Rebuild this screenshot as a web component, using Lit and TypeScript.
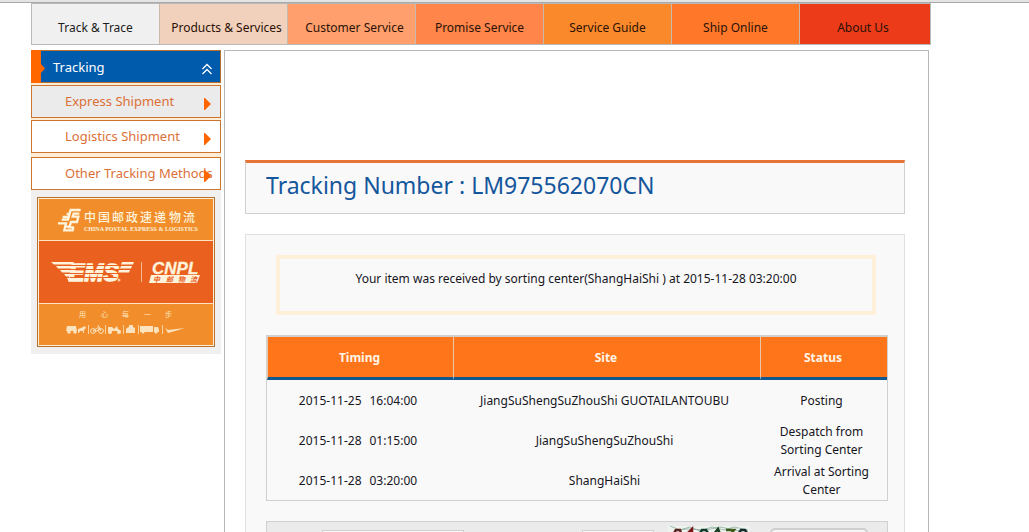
import { LitElement, html, css } from "lit";
import { customElement, property } from "lit/decorators.js";

const NAV = [
  { label: "Track & Trace", tone: "t1" },
  { label: "Products & Services", tone: "t2" },
  { label: "Customer Service", tone: "t3" },
  { label: "Promise Service", tone: "t4" },
  { label: "Service Guide", tone: "t5" },
  { label: "Ship Online", tone: "t6" },
  { label: "About Us", tone: "t7" },
];

const EVENTS = [
  { day: "2015-11-25", time: "16:04:00", site: "JiangSuShengSuZhouShi GUOTAILANTOUBU", status: "Posting" },
  { day: "2015-11-28", time: "01:15:00", site: "JiangSuShengSuZhouShi", status: "Despatch from Sorting Center" },
  { day: "2015-11-28", time: "03:20:00", site: "ShangHaiShi", status: "Arrival at Sorting Center" },
];

@customElement("site-nav")
export class SiteNav extends LitElement {
  static styles = css`
    :host { display: block; }
    .bar {
      display: grid;
      grid-template-columns: 127fr repeat(5, 128fr) 131fr;
      border: 1px solid #b9b9b9;
    }
    .item {
      height: 40px;
      padding-top: 8px;
      box-sizing: border-box;
      border-left: 1px solid #c9b9ab;
      font: 12px/32px "Noto Sans", "Open Sans", sans-serif;
      text-align: center;
      white-space: nowrap;
      text-decoration: none;
      color: #2b1206;
    }
    .t1 { background: #f0f0f0; color: #1c1c1c; border-left: 0; }
    .t2 { background: #f2d1bc; }
    .t3 { background: #ff9f6d; }
    .t4 { background: #ff854a; }
    .t5 { background: #fa892b; }
    .t6 { background: #ff782a; }
    .t7 { background: #eb3b19; }
    .t2, .t3 { padding-left: 6px; }
    .t7 { padding-right: 4px; }
  `;
  render() {
    return html`<nav class="bar">
      ${NAV.map((n) => html`<a class="item ${n.tone}" href="#">${n.label}</a>`)}
    </nav>`;
  }
}

@customElement("brand-banner")
export class BrandBanner extends LitElement {
  static styles = css`
    :host { display: block; }
    .art { display: block; width: 100%; }
    .kai { font-family: "Noto Sans CJK SC", sans-serif; }
    .serif { font-family: "Liberation Serif", serif; font-weight: bold; }
    .logo { font-family: "Liberation Sans", sans-serif; font-weight: bold; font-style: italic; }
  `;
  render() {
    const cream = "#fff3dc";
    return html`<svg class="art" viewBox="0 0 178 150" role="img" aria-label="China Postal Express and Logistics">
      <rect width="178" height="150" fill="#b9702c" />
      <rect x="1" y="1" width="176" height="148" fill="#fdf0d8" />
      <rect x="2" y="2" width="174" height="146" fill="#f18e2b" />
      <rect x="2" y="43" width="174" height="64" fill="#fde3c4" />
      <rect x="2" y="44" width="174" height="62" fill="#ea611f" />
      <g transform="translate(13 3) scale(.3333)" fill="none" stroke=${cream} stroke-width="7">
        <path d="M92 30H62L54 59H35M88 41H71L68 50H85L81 66H63L58 82H72M24 70H48L43 91H68L70 82M50 42H60M38 51H56M42 80H56" />
      </g>
      <g fill=${cream}>
        <text class="kai" font-size="12" font-weight="500" y="25" x="47 61 75 89 103 117 132 146">中国邮政速递物流</text>
        <text class="serif" font-size="6" x="47" y="34">CHINA POSTAL EXPRESS &amp; LOGISTICS</text>
        <path d="M14 65H37L36 67.500H17ZM19 69H36L35 71.500H21ZM23 73H35L34 75.500H25ZM27 77H34L33 79.500H29ZM30 81H33L32 85Z" />
        <text class="logo" font-size="23" x="32" y="84" stroke=${cream} stroke-width="1.400">EMS</text>
        <path d="M85 65H97L96 67.500H84ZM84 69H95L94 71.500H83ZM82 73H93L92 75.500H81Z" />
        <circle cx="82" cy="83" r="1.500" opacity=".7" />
        <rect x="104" y="65" width="1" height="20" opacity=".6" />
        <text class="logo" font-size="17" x="115" y="77" stroke=${cream} stroke-width=".3">CNPL</text>
        <path d="M114 78H163L160 86H112Z" />
      </g>
      <path d="M33 68.500H83M33 72.500H83M33 76.500H83M33 80.500H80" stroke="#ea611f" stroke-width="1" />
      <text class="kai" font-size="7" font-weight="bold" font-style="italic" fill="#ea611f" y="84.500" x="116 129 141 153">中邮物流</text>
      <g fill="#fde3bd">
        <text class="kai" font-size="7" y="120" x="42 64 85 107 128">用心每一步</text>
        <path d="M30 129H39L40 134H29ZM41 132L44 131L48 129L49 131L47 133V136H46V134H43L42 136H41Z" />
        <circle cx="32" cy="135" r="1.800" /><circle cx="38" cy="135" r="1.800" />
        <path d="M71 130H75L77 132L80 129L81 132L84 134H71Z" />
        <circle cx="73" cy="135" r="2" /><circle cx="82" cy="135" r="2" />
        <path d="M90 131L92 130V128H96V130L98 131V136H89V132Z" />
        <path d="M103 129H116V135H103ZM117 130H121L122 133V135H117Z" />
        <circle cx="106" cy="135" r="1.500" /><circle cx="119" cy="135" r="1.500" />
        <path d="M128 131L131 133L148 131L138 134L131 136Z" />
      </g>
      <g fill="none" stroke="#fde3bd" stroke-width="1">
        <circle cx="56" cy="134" r="2.400" /><circle cx="64" cy="134" r="2.400" />
        <path d="M56 134L60 131H63L60 134ZM61 128L64 134" />
        <path d="M51.500 128V137M68.500 128V137M86.500 128V137M101.500 128V137M125.500 128V137" opacity=".8" />
      </g>
    </svg>`;
  }
}

@customElement("tracking-menu")
export class TrackingMenu extends LitElement {
  static styles = css`
    :host { display: block; background: #f0f0f0; font: 13px/32px "Noto Sans", "Open Sans", sans-serif; }
    .head {
      display: flex;
      align-items: center;
      width: 100%;
      height: 33px;
      box-sizing: border-box;
      padding: 0 8px 0 0;
      border: 1px solid #b9702c;
      border-left: 0;
      background: #005bac;
      color: #fff;
      font: inherit;
      text-align: left;
    }
    .tab { flex: none; width: 14px; height: 33px; }
    .name { flex: 1; padding-left: 8px; }
    .up { flex: none; width: 10px; height: 12px; margin-top: 4px; }
    .list { display: grid; row-gap: 2px; margin: 0; padding: 2px 0 0; list-style: none; background: #feecd6; }
    .entry { display: grid; }
    .last { padding-top: 2px; }
    .link {
      display: grid;
      grid-template-columns: 1fr 7px;
      align-items: center;
      height: 33px;
      box-sizing: border-box;
      padding: 0 9px 0 33px;
      border: 1px solid #cc752f;
      background: #fff;
      color: #dc7038;
      line-height: 31px;
      white-space: nowrap;
      text-decoration: none;
    }
    .text { min-width: 0; width: 0; }
    .on { background: #ebebeb; }
    .arrow { width: 7px; height: 12px; margin-top: 4px; }
    .foot { padding: 7px 6px 7px; }
  `;
  render() {
    const items = ["Express Shipment", "Logistics Shipment", "Other Tracking Methods"];
    return html`
      <button class="head" type="button">
        <svg class="tab" viewBox="0 0 14 33"><path fill="#ff6600" d="M0 0H10V14L14 18.500L10 23V33H0Z" /></svg>
        <span class="name">Tracking</span>
        <svg class="up" viewBox="0 0 10 12" fill="none" stroke="#fff" stroke-width="1.300">
          <path d="M.5 6L5 1.500L9.500 6M.5 11L5 6.500L9.500 11" />
        </svg>
      </button>
      <ul class="list">
        ${items.map(
          (t, i) => html`<li class="entry ${i === 2 ? "last" : ""}">
            <a class="link ${i === 0 ? "on" : ""}" href="#">
              <span class="text">${t}</span>
              <svg class="arrow" viewBox="0 0 7 12"><path fill="#ff6600" d="M0 0H1L7 6L1 12H0Z" /></svg>
            </a>
          </li>`
        )}
      </ul>
      <div class="foot"><brand-banner></brand-banner></div>
    `;
  }
}

@customElement("tracking-result")
export class TrackingResult extends LitElement {
  @property() number = "LM975562070CN";

  static styles = css`
    :host {
      display: block;
      box-sizing: border-box;
      padding: 109px 23px 20px 20px;
      border: 1px solid #b7b7b7;
      background: #fff;
      color: #15151d;
      font: 12px/18px "Noto Sans", "Open Sans", sans-serif;
    }
    .title {
      margin: 0 0 20px;
      height: 54px;
      box-sizing: border-box;
      padding-left: 20px;
      border: 1px solid #d0d0d0;
      border-top: 3px solid #e87436;
      background: #f9f9f9;
      color: #14569c;
      font-weight: normal;
      font-size: 23px;
      line-height: 44px;
    }
    .box { padding: 20px 16px 20px 20px; border: 1px solid #e0e0e0; background: #f9f9f9; }
    .notice {
      height: 60px;
      box-sizing: border-box;
      margin: 0 12px 20px 10px;
      padding-top: 11px;
      border: 4px solid #fff1d9;
      text-align: center;
    }
    .events {
      width: 100%;
      table-layout: fixed;
      border-spacing: 0;
      border: 1px solid #d0d0d0;
      text-align: center;
    }
    .when { width: 30%; }
    .state { width: 127px; }
    .th {
      height: 44px;
      box-sizing: border-box;
      padding: 2px 2px 0 0;
      border-top: 1px solid #d0d0d0;
      border-left: 1px solid #e8c9ae;
      border-bottom: 3px solid #10588f;
      background: #ff761a;
      color: #fff4e6;
      font-weight: bold;
    }
    .td { height: 40px; box-sizing: border-box; padding: 3px 10px 1px 6px; }
    .time { margin-left: 8px; }
    .query {
      display: flex;
      justify-content: end;
      height: 60px;
      margin-top: 20px;
      padding: 8px 19px 0 0;
      border: 1px solid #d0d0d0;
      background: #ebebeb;
    }
    .field { height: 24px; box-sizing: border-box; border: 1px solid #cfcfcf; background: #f9f9f9; }
    .wide { width: 142px; margin-right: 118px; }
    .short { width: 72px; margin-right: 14px; }
    .code { width: 82px; height: 24px; margin: -4px 20px 0 0; }
    .go {
      width: 98px;
      height: 28px;
      margin-top: -2px;
      border: 2px solid #cfcfcf;
      border-radius: 5px;
      background: #f6f6f6;
    }
  `;
  render() {
    return html`
      <h1 class="title">Tracking Number : ${this.number}</h1>
      <section class="box">
        <p class="notice">Your item was received by sorting center(ShangHaiShi ) at 2015-11-28 03:20:00</p>
        <table class="events">
          <thead>
            <tr><th class="th when">Timing</th><th class="th">Site</th><th class="th state">Status</th></tr>
          </thead>
          <tbody>
            ${EVENTS.map(
              (e) => html`<tr>
                <td class="td">${e.day}<span class="time">${e.time}</span></td>
                <td class="td">${e.site}</td>
                <td class="td">${e.status}</td>
              </tr>`
            )}
          </tbody>
        </table>
        <form class="query">
          <input class="field wide" type="text" aria-label="Tracking number" />
          <input class="field short" type="text" aria-label="Code" />
          <svg class="code" viewBox="0 0 82 24" aria-hidden="true">
            <rect width="82" height="24" fill="#eef3ee" />
            <path d="M2 0L12 4L22 1L32 5L44 1L56 4L66 1L80 4M6 4L20 3L38 4L52 1L72 5" fill="none" stroke="#7fa294" stroke-width=".7" />
            <g fill="none" stroke-width="2.500">
              <path d="M6 7L8 4H12L13 7" stroke="#5c2323" /><path d="M20 7L24 3V9" stroke="#7a1818" />
              <path d="M32 7L34 4H38L40 7" stroke="#123b2c" /><path d="M46 8L50 3L52 8" stroke="#143d22" />
              <path d="M58 4H66L62 9" stroke="#3d5a1c" /><path d="M71 7L73 4H77L79 7" stroke="#142c2c" />
            </g>
          </svg>
          <button class="go" type="button" aria-label="Query"></button>
        </form>
      </section>
    `;
  }
}

@customElement("app-root")
export class AppRoot extends LitElement {
  static styles = css`
    :host { display: block; height: 100vh; overflow: hidden; background: #fff; }
    .edge { height: 2px; background: #e4e4e4; border-bottom: 1px solid #a9a9a9; }
    .page { padding: 0 98px 0 31px; }
    .cols {
      display: grid;
      grid-template-columns: 190px minmax(0, 1fr);
      column-gap: 3px;
      align-items: start;
      padding: 5px 2px 0 0;
    }
  `;
  render() {
    return html`
      <div class="edge"></div>
      <div class="page">
        <site-nav></site-nav>
        <main class="cols">
          <tracking-menu></tracking-menu>
          <tracking-result></tracking-result>
        </main>
      </div>
    `;
  }
}
